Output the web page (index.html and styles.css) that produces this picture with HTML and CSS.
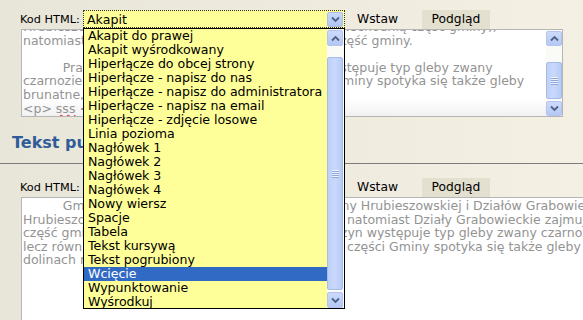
FILE: index.html
```html
<!DOCTYPE html>
<html lang="pl">
<head>
<meta charset="utf-8">
<title>Edytor</title>
<link rel="stylesheet" href="styles.css">
</head>
<body>
<section class="editor e1">
  <div class="toolbar">
    <span class="label">Kod HTML:</span>
    <div class="select">
      <span class="sel-text">Akapit</span>
      <span class="sel-btn"><svg width="9" height="7" viewBox="0 0 9 7"><path d="M1 1.5 L4.5 5 L8 1.5" fill="none" stroke="#4D6185" stroke-width="1.8"/></svg></span>
    </div>
    <span class="btn">Wstaw</span>
    <span class="tab">Podgląd</span>
  </div>
  <div class="area a1">
    <div class="area-text t1">
<div class="ln">Hrubieszowskiej, Działy Grabowieckie zajmują zaś wschodnią część gminy),</div>
<div class="ln">natomiast Działy Grabowieckie zajmują mniejszą część gminy.</div>
<div class="ln"> </div>
<div class="ln">          Prawie na całym obszarze dawnej Gminy występuje typ gleby zwany</div>
<div class="ln">czarnoziemem, natomiast w dolinie rzeki i części Gminy spotyka się także gleby</div>
<div class="ln">brunatne, mady i gleby bagienne.</div>
<div class="ln">&lt;p&gt; <span class="spell">sss</span> &lt;/p&gt;</div>
    </div>
    <div class="vscroll">
      <span class="sb-btn"><svg width="9" height="7" viewBox="0 0 9 7"><path d="M1 5.5 L4.5 2 L8 5.5" fill="none" stroke="#4D6185" stroke-width="1.8"/></svg></span>
      <div class="sb-track">
        <div class="thumb th1"><span class="grip"></span></div>
      </div>
      <span class="sb-btn"><svg width="9" height="7" viewBox="0 0 9 7"><path d="M1 1.5 L4.5 5 L8 1.5" fill="none" stroke="#4D6185" stroke-width="1.8"/></svg></span>
    </div>
  </div>
</section>

<h2 class="heading">Tekst publikacji</h2>
<div class="rule"></div>

<section class="editor e2">
  <div class="toolbar">
    <span class="label">Kod HTML:</span>
    <div class="select">
      <span class="sel-text">Akapit</span>
      <span class="sel-btn"><svg width="9" height="7" viewBox="0 0 9 7"><path d="M1 1.5 L4.5 5 L8 1.5" fill="none" stroke="#4D6185" stroke-width="1.8"/></svg></span>
    </div>
    <span class="btn">Wstaw</span>
    <span class="tab">Podgląd</span>
  </div>
  <div class="area a2">
    <div class="area-text t2">
<div class="ln">          Gmina wiejska położona jest  w obrębie Kotliny Hrubieszowskiej i Działów Grabowieckich.</div>
<div class="ln">Hrubieszowska zajmuje zachodnią, centralną część natomiast Działy Grabowieckie zajmują</div>
<div class="ln">część gminy. Na przeważającym obszarze tych  wyżyn występuje typ gleby zwany czarnoziemem,</div>
<div class="ln">lecz również mniej żyzne gleby płowe. W północnej części Gminy spotyka się także gleby</div>
<div class="ln">dolinach rzek mady i gleby bagienne.</div>
    </div>
  </div>
</section>

<div class="dropdown">
  <ul class="items">
    <li>Akapit do prawej</li>
    <li>Akapit wyśrodkowany</li>
    <li>Hiperłącze do obcej strony</li>
    <li>Hiperłącze - napisz do nas</li>
    <li>Hiperłącze - napisz do administratora</li>
    <li>Hiperłącze - napisz na email</li>
    <li>Hiperłącze - zdjęcie losowe</li>
    <li>Linia pozioma</li>
    <li>Nagłówek 1</li>
    <li>Nagłówek 2</li>
    <li>Nagłówek 3</li>
    <li>Nagłówek 4</li>
    <li>Nowy wiersz</li>
    <li>Spacje</li>
    <li>Tabela</li>
    <li>Tekst kursywą</li>
    <li>Tekst pogrubiony</li>
    <li class="active">Wcięcie</li>
    <li>Wypunktowanie</li>
    <li>Wyśrodkuj</li>
  </ul>
  <div class="vscroll dd-sb">
    <span class="sb-btn"><svg width="9" height="7" viewBox="0 0 9 7"><path d="M1 5.5 L4.5 2 L8 5.5" fill="none" stroke="#4D6185" stroke-width="1.8"/></svg></span>
    <div class="sb-track">
      <div class="thumb th2"><span class="grip"></span></div>
    </div>
    <span class="sb-btn"><svg width="9" height="7" viewBox="0 0 9 7"><path d="M1 1.5 L4.5 5 L8 1.5" fill="none" stroke="#4D6185" stroke-width="1.8"/></svg></span>
  </div>
</div>
</body>
</html>
```

FILE: styles.css
```css
html, body {
  margin: 0;
  padding: 0;
}
body {
  width: 583px;
  height: 320px;
  overflow: hidden;
  position: relative;
  background: linear-gradient(to right, #E8E5D9, #F4F0E3);
  font-family: "DejaVu Sans", Verdana, sans-serif;
  font-size: 11px;
  color: #000;
}

.editor {
  padding-left: 20px;
}
.e1 {
  padding-top: 10px;
}
.e2 {
  padding-top: 14px;
}

.toolbar {
  display: flex;
  align-items: center;
  height: 18px;
}
.label {
  width: 63px;
  font-size: 11.3px;
  white-space: nowrap;
}
.select {
  box-sizing: border-box;
  width: 262px;
  height: 18px;
  border: 1px dotted #333;
  background: #FFFF99;
  display: flex;
  align-items: center;
  justify-content: space-between;
  padding-left: 3px;
  font-size: 12.6px;
}
.sel-btn {
  box-sizing: border-box;
  width: 16px;
  height: 15px;
  margin-right: 1px;
  border: 1px solid #A9BEEC;
  border-radius: 2px;
  background: linear-gradient(to bottom, #C9D8FB, #B0C5F3);
  display: flex;
  align-items: center;
  justify-content: center;
}
.btn {
  margin-left: 12px;
  font-size: 12.3px;
}
.tab {
  margin-left: 24px;
  width: 68px;
  height: 19px;
  background: #E4E0D0;
  font-size: 12.3px;
  display: flex;
  align-items: center;
  justify-content: center;
}

.area {
  box-sizing: border-box;
  margin-left: 1px;
  margin-top: 1px;
  border: 1px solid #B5B5B5;
  background: #fff;
  display: flex;
  overflow: hidden;
}
.a1 {
  width: 542px;
  height: 88px;
  background: linear-gradient(to bottom, #fff 80%, #F1F1F1);
}
.a2 {
  width: 620px;
  height: 140px;
}
.area-text {
  flex: 1;
  overflow: hidden;
  padding-left: 1px;
  font-size: 12.5px;
  line-height: 13.6px;
  color: #939393;
}
.ln {
  white-space: pre;
}
.t1 {
  margin-top: -10px;
}
.t2 {
  margin-top: 1px;
}
.spell {
  text-decoration: underline wavy #E02020;
  text-decoration-thickness: 1px;
}

.vscroll {
  width: 16px;
  display: flex;
  flex-direction: column;
  background: #FAFAF7;
}
.sb-btn {
  box-sizing: border-box;
  width: 16px;
  height: 15px;
  border: 1px solid #B3C5EE;
  border-radius: 2px;
  background: linear-gradient(to bottom, #CCDAFB, #B5C8F4);
  display: flex;
  align-items: center;
  justify-content: center;
  margin-top: 1px;
}
.sb-track {
  flex: 1;
  display: flex;
  flex-direction: column;
}
.thumb {
  box-sizing: border-box;
  width: 16px;
  border: 1px solid #A6BBEA;
  border-radius: 2px;
  background: linear-gradient(to right, #BFD0F8, #C9D8FC 50%, #B8CBF5);
  display: flex;
  align-items: center;
  justify-content: center;
}
.th1 {
  margin-top: 16px;
  height: 37px;
}
.th2 {
  margin-top: 11px;
  height: 233px;
}
.grip {
  width: 7px;
  height: 8px;
  background: repeating-linear-gradient(to bottom, #EEF3FE 0 1px, #8EA7DA 1px 2px);
}

.heading {
  margin: 16px 0 0 12px;
  font-size: 16px;
  line-height: 20px;
  font-weight: bold;
  color: #2F5C98;
}
.rule {
  margin-top: 10px;
  border-top: 1px solid #7C7C7C;
}

.dropdown {
  position: absolute;
  left: 83px;
  top: 28px;
  box-sizing: border-box;
  width: 262px;
  height: 281px;
  border: 1px solid #000;
  background: #FFFF99;
  display: flex;
}
.items {
  flex: 1;
  list-style: none;
  margin: 0;
  padding: 0;
  font-size: 12.6px;
  letter-spacing: -0.05px;
}
.items li {
  height: 14px;
  line-height: 14px;
  padding-left: 4px;
  white-space: nowrap;
}
.items li.active {
  background: #316AC5;
  color: #fff;
}
.dd-sb {
  width: 17px;
  background: #FBFBF8;
}
.dd-sb .sb-btn {
  height: 16px;
}
```
